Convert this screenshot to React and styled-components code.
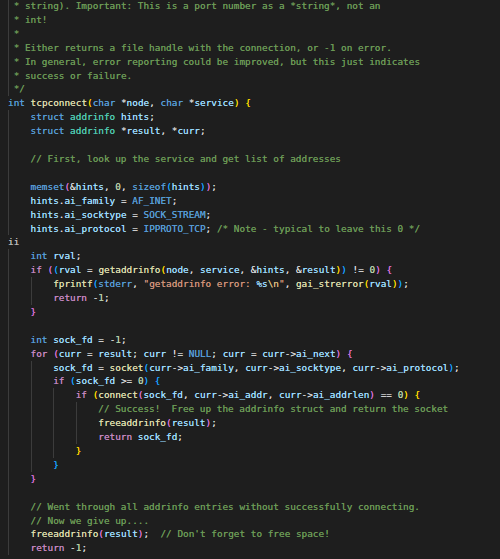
import React from 'react';
import styled, { createGlobalStyle } from 'styled-components';

const GlobalStyle = createGlobalStyle`
  html, body {
    margin: 0;
    padding: 0;
    background: #1e1e1e;
    overflow: hidden;
  }
`;

const colors = {
  text: '#d4d4d4',
  comment: '#6a9955',
  keyword: '#569cd6',
  control: '#c586c0',
  type: '#4ec9b0',
  func: '#dcdcaa',
  variable: '#9cdcfe',
  number: '#b5cea8',
  string: '#ce9178',
  escape: '#d7ba7d',
  format: '#9cdcfe',
};

const bracketColors = ['#ffd700', '#da70d6', '#179fff'];

const keywords = ['int', 'char', 'struct', 'sizeof', 'void', 'const'];
const controls = ['if', 'for', 'return', 'while', 'else'];
const types = ['addrinfo'];
const macros = ['memset', 'stderr', 'AF_INET', 'SOCK_STREAM', 'IPPROTO_TCP', 'NULL'];

const source = [
  ' * string). Important: This is a port number as a *string*, not an',
  ' * int!',
  ' *',
  ' * Either returns a file handle with the connection, or -1 on error.',
  ' * In general, error reporting could be improved, but this just indicates',
  ' * success or failure.',
  ' */',
  'int tcpconnect(char *node, char *service) {',
  '    struct addrinfo hints;',
  '    struct addrinfo *result, *curr;',
  '',
  '    // First, look up the service and get list of addresses',
  '',
  '    memset(&hints, 0, sizeof(hints));',
  '    hints.ai_family = AF_INET;',
  '    hints.ai_socktype = SOCK_STREAM;',
  '    hints.ai_protocol = IPPROTO_TCP; /* Note - typical to leave this 0 */',
  'ii',
  '    int rval;',
  '    if ((rval = getaddrinfo(node, service, &hints, &result)) != 0) {',
  '        fprintf(stderr, "getaddrinfo error: %s\\n", gai_strerror(rval));',
  '        return -1;',
  '    }',
  '',
  '    int sock_fd = -1;',
  '    for (curr = result; curr != NULL; curr = curr->ai_next) {',
  '        sock_fd = socket(curr->ai_family, curr->ai_socktype, curr->ai_protocol);',
  '        if (sock_fd >= 0) {',
  '            if (connect(sock_fd, curr->ai_addr, curr->ai_addrlen) == 0) {',
  '                // Success!  Free up the addrinfo struct and return the socket',
  '                freeaddrinfo(result);',
  '                return sock_fd;',
  '            }',
  '        }',
  '    }',
  '',
  '    // Went through all addrinfo entries without successfully connecting.',
  '    // Now we give up....',
  '    freeaddrinfo(result);  // Don\'t forget to free space!',
  '    return -1;',
];

// tiny C highlighter with bracket-pair colouring
function tokenize(code, state) {
  const out = [];
  let i = 0;
  const push = (text, color) => out.push({ text, color });
  while (i < code.length) {
    if (state.inComment) {
      const end = code.indexOf('*/', i);
      if (end === -1) {
        push(code.slice(i), colors.comment);
        i = code.length;
      } else {
        push(code.slice(i, end + 2), colors.comment);
        i = end + 2;
        state.inComment = false;
      }
      continue;
    }
    const rest = code.slice(i);
    if (rest.startsWith('/*')) {
      state.inComment = true;
      continue;
    }
    if (rest.startsWith('//')) {
      push(rest, colors.comment);
      break;
    }
    const ch = code[i];
    if (ch === '"') {
      let j = i + 1;
      push('"', colors.string);
      let buf = '';
      while (j < code.length && code[j] !== '"') {
        if (code[j] === '\\') {
          if (buf) { push(buf, colors.string); buf = ''; }
          push(code.slice(j, j + 2), colors.escape);
          j += 2;
        } else if (code[j] === '%') {
          if (buf) { push(buf, colors.string); buf = ''; }
          push(code.slice(j, j + 2), colors.format);
          j += 2;
        } else {
          buf += code[j];
          j++;
        }
      }
      if (buf) push(buf, colors.string);
      push('"', colors.string);
      i = j + 1;
      continue;
    }
    const num = rest.match(/^\d+/);
    if (num) {
      push(num[0], colors.number);
      i += num[0].length;
      continue;
    }
    const word = rest.match(/^[A-Za-z_]\w*/);
    if (word) {
      const w = word[0];
      const after = rest.slice(w.length);
      let color = colors.variable;
      if (keywords.includes(w)) color = colors.keyword;
      else if (controls.includes(w)) color = colors.control;
      else if (types.includes(w)) color = colors.type;
      else if (macros.includes(w)) color = colors.keyword;
      else if (/^\s*\(/.test(after)) color = colors.func;
      else if (w === 'ii') color = '#bbbbbb';
      push(w, color);
      i += w.length;
      continue;
    }
    if ('({['.includes(ch)) {
      push(ch, bracketColors[state.depth % 3]);
      state.depth++;
      i++;
      continue;
    }
    if (')}]'.includes(ch)) {
      state.depth = Math.max(0, state.depth - 1);
      push(ch, bracketColors[state.depth % 3]);
      i++;
      continue;
    }
    push(ch, colors.text);
    i++;
  }
  return out;
}

function buildLines() {
  const state = { inComment: true, depth: 0 };
  const indents = source.map((l) => (l.trim() ? l.length - l.trimStart().length : null));
  return source.map((line, idx) => {
    let indent = indents[idx];
    if (indent === null) {
      let prev = 0;
      let next = 0;
      for (let k = idx - 1; k >= 0; k--) if (indents[k] !== null) { prev = indents[k]; break; }
      for (let k = idx + 1; k < source.length; k++) if (indents[k] !== null) { next = indents[k]; break; }
      indent = Math.max(prev, next);
    }
    const guides = [];
    for (let c = 0; c < indent; c += 4) guides.push(Math.min(4, indent - c));
    const code = line.trimStart();
    return { guides, tokens: tokenize(code, state) };
  });
}

const Editor = styled.div`
  width: 500px;
  height: 559px;
  background: #1e1e1e;
  overflow: hidden;
`;

const Code = styled.div`
  margin-top: -1px;
  padding-left: 8px;
  font-family: 'DejaVu Sans Mono', 'Liberation Mono', monospace;
  font-size: 9.38px;
  color: ${colors.text};
  text-shadow: 0 0 0.4px currentColor;
`;

const Line = styled.div`
  display: flex;
  height: 13.92px;
  line-height: 13.92px;
  white-space: pre;
`;

const Guide = styled.span`
  flex: none;
  width: ${(p) => p.$cols}ch;
  box-shadow: inset 1px 0 0 #3c3c3c;
`;

const Token = styled.span`
  color: ${(p) => p.$color};
`;

export default function App() {
  const lines = buildLines();
  return (
    <>
      <GlobalStyle />
      <Editor>
        <Code>
          {lines.map((line, i) => (
            <Line key={i}>
              {line.guides.map((cols, g) => (
                <Guide key={g} $cols={cols} />
              ))}
              {line.tokens.map((t, k) => (
                <Token key={k} $color={t.color}>{t.text}</Token>
              ))}
            </Line>
          ))}
        </Code>
      </Editor>
    </>
  );
}
